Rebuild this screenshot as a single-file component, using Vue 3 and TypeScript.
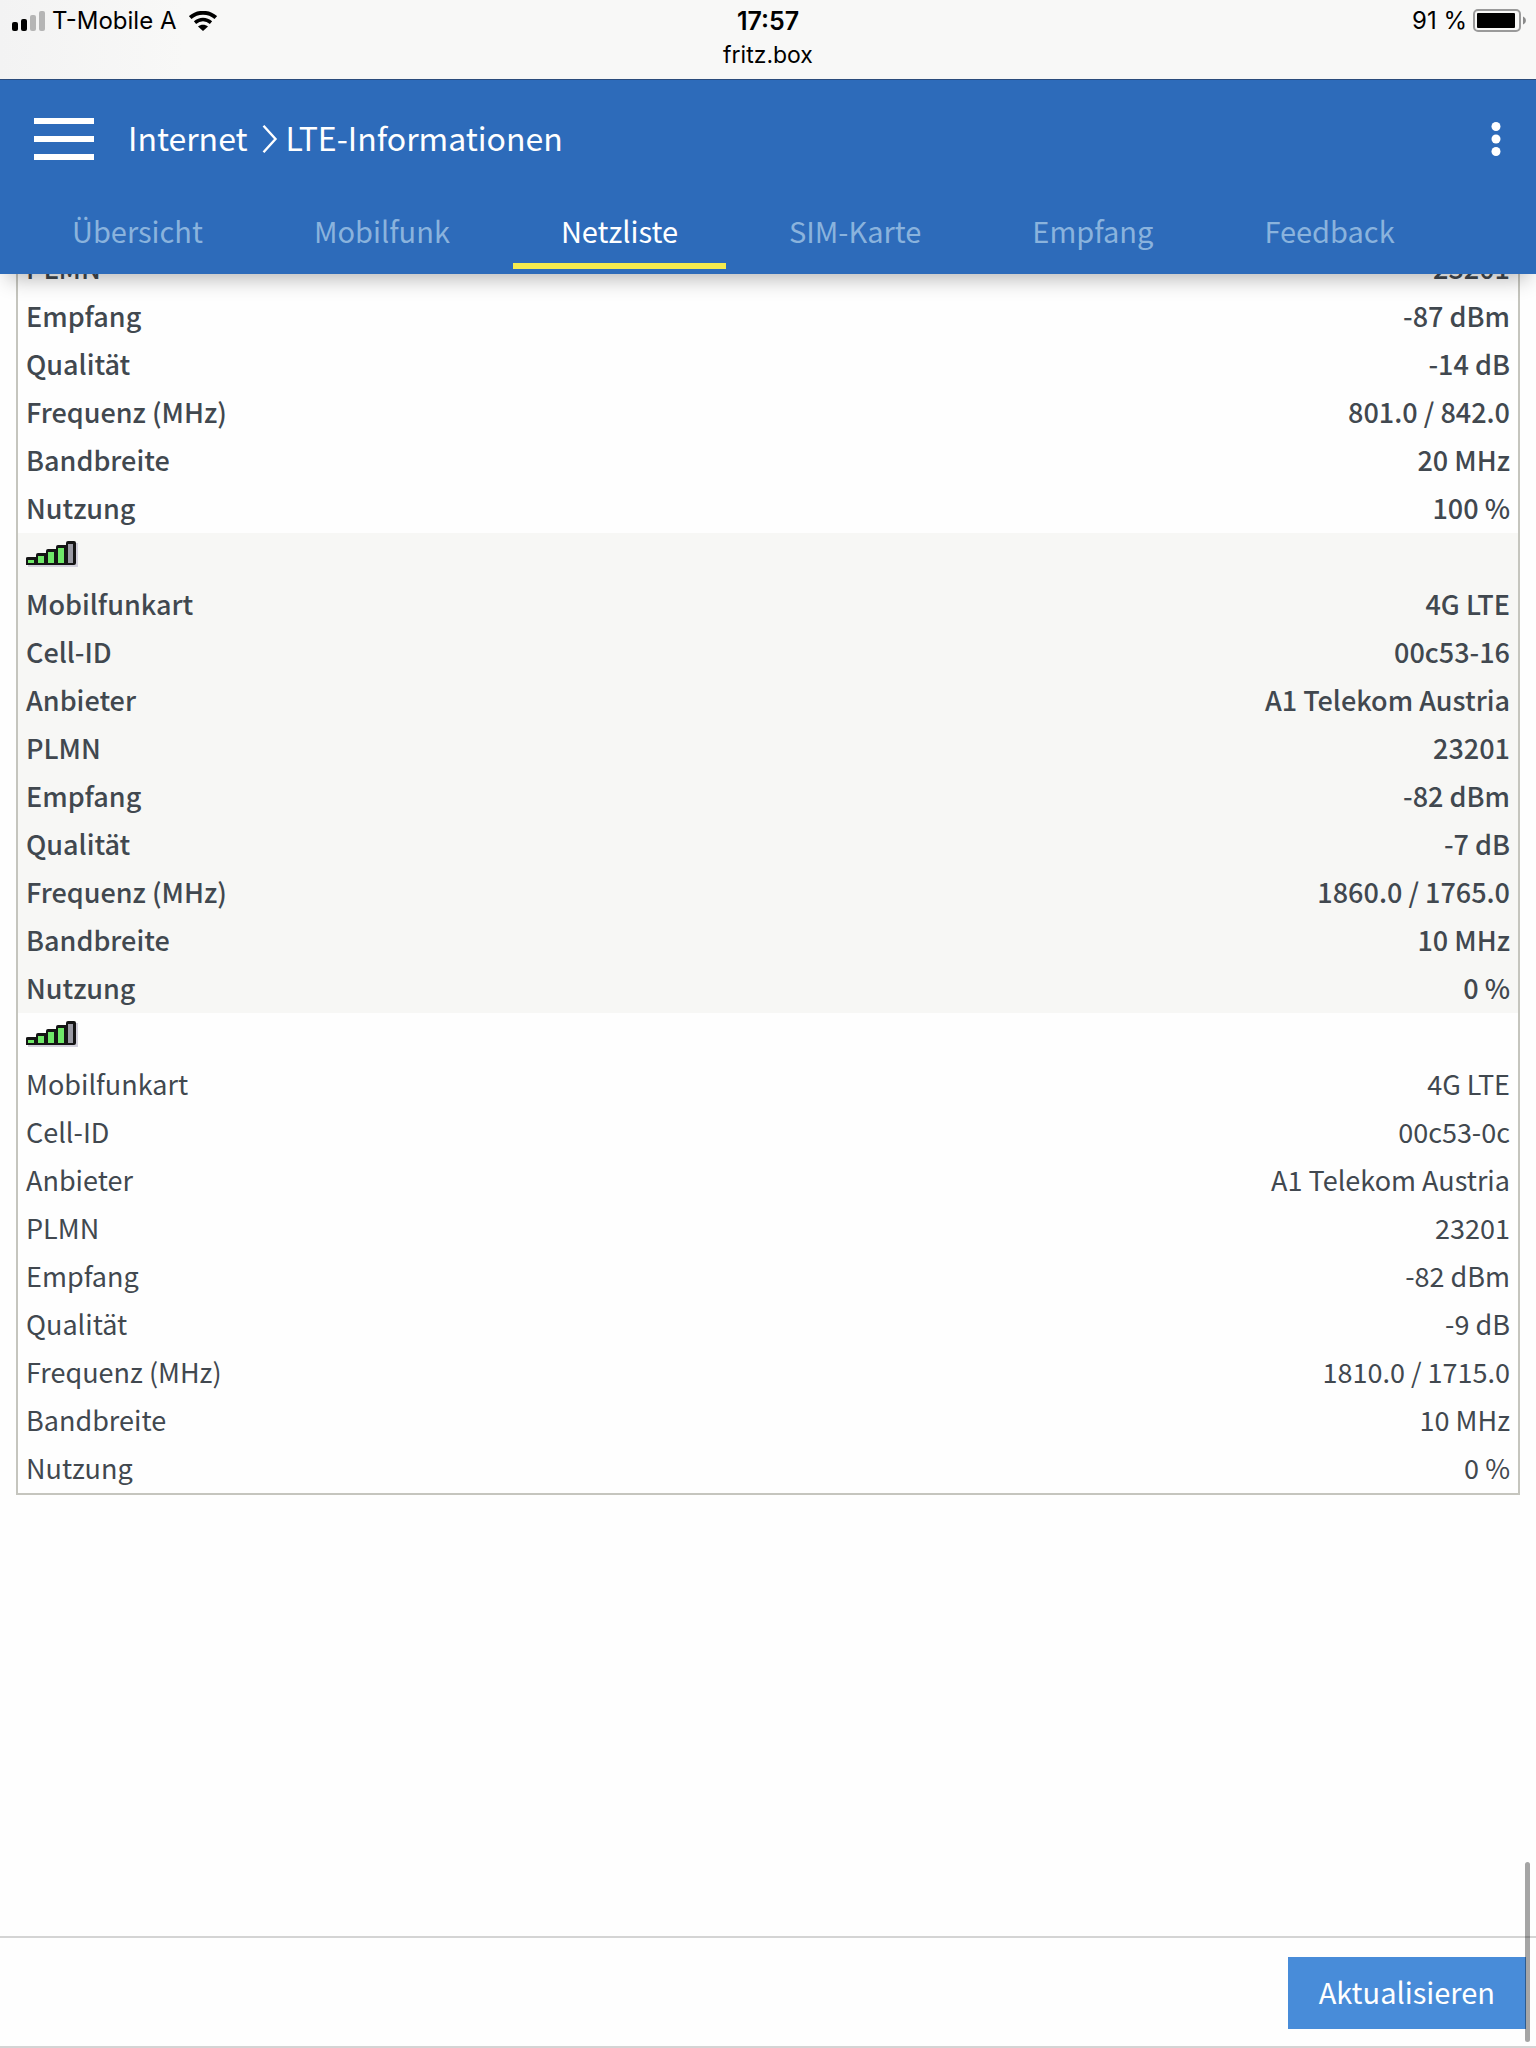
<script setup lang="ts">
interface Row {
  label: string
  value: string
}

interface Cell {
  id: string
  icon: boolean
  connected: boolean
  shaded: boolean
  rows: Row[]
}

const tabs: string[] = ['Übersicht', 'Mobilfunk', 'Netzliste', 'SIM-Karte', 'Empfang', 'Feedback']
const activeTab = 'Netzliste'

const cells: Cell[] = [
  {
    id: 'first',
    icon: false,
    connected: true,
    shaded: false,
    rows: [
      { label: 'PLMN', value: '23201' },
      { label: 'Empfang', value: '-87 dBm' },
      { label: 'Qualität', value: '-14 dB' },
      { label: 'Frequenz (MHz)', value: '801.0 / 842.0' },
      { label: 'Bandbreite', value: '20 MHz' },
      { label: 'Nutzung', value: '100 %' },
    ],
  },
  {
    id: 'second',
    icon: true,
    connected: true,
    shaded: true,
    rows: [
      { label: 'Mobilfunkart', value: '4G LTE' },
      { label: 'Cell-ID', value: '00c53-16' },
      { label: 'Anbieter', value: 'A1 Telekom Austria' },
      { label: 'PLMN', value: '23201' },
      { label: 'Empfang', value: '-82 dBm' },
      { label: 'Qualität', value: '-7 dB' },
      { label: 'Frequenz (MHz)', value: '1860.0 / 1765.0' },
      { label: 'Bandbreite', value: '10 MHz' },
      { label: 'Nutzung', value: '0 %' },
    ],
  },
  {
    id: 'third',
    icon: true,
    connected: false,
    shaded: false,
    rows: [
      { label: 'Mobilfunkart', value: '4G LTE' },
      { label: 'Cell-ID', value: '00c53-0c' },
      { label: 'Anbieter', value: 'A1 Telekom Austria' },
      { label: 'PLMN', value: '23201' },
      { label: 'Empfang', value: '-82 dBm' },
      { label: 'Qualität', value: '-9 dB' },
      { label: 'Frequenz (MHz)', value: '1810.0 / 1715.0' },
      { label: 'Bandbreite', value: '10 MHz' },
      { label: 'Nutzung', value: '0 %' },
    ],
  },
]
</script>

<template>
  <div class="screen">
    <div class="status">
      <div class="status-row">
        <div class="carrier">
          <svg class="bars" width="34" height="20" viewBox="0 0 34 20" aria-hidden="true">
            <rect x="0" y="11" width="6" height="9" rx="2" />
            <rect x="9" y="8" width="6" height="12" rx="2" />
            <rect x="18" y="4" width="6" height="16" rx="2" fill="#b5b5b5" />
            <rect x="27" y="0" width="6" height="20" rx="2" fill="#b5b5b5" />
          </svg>
          <span>T-Mobile A</span>
          <svg class="wifi" width="28" height="20" viewBox="0 0 28 20" aria-hidden="true">
            <path d="M1.2 6.6C8.4 .1 19.600 .1 26.800 6.600" fill="none" stroke="#000" stroke-width="3.800" />
            <path d="M6 11.600C10.800 7.400 17.200 7.400 22 11.600" fill="none" stroke="#000" stroke-width="3.400" />
            <path d="M9 15.600C11.800 13 16.200 13 19 15.600L14 20Z" />
          </svg>
        </div>
        <div class="time">17:57</div>
        <div class="power">
          <span>91 %</span>
          <svg width="53" height="24" viewBox="0 0 53 24" aria-hidden="true">
            <rect x="1" y="1" width="46" height="21" rx="4" fill="none" stroke="#9a9a9a" stroke-width="2" />
            <rect x="4" y="4" width="38" height="15" rx="1" />
            <path d="M50 7.500C53.800 9 53.800 14 50 15.500Z" fill="#8a8a8a" />
          </svg>
        </div>
      </div>
      <div class="host">fritz.box</div>
    </div>

    <header class="header">
      <div class="title-row">
        <button class="menu" type="button" aria-label="Menü">
          <span></span>
          <span></span>
          <span></span>
        </button>
        <h1 class="crumbs">
          <span>Internet</span>
          <svg width="16" height="28" viewBox="0 0 16 28" aria-hidden="true">
            <path d="M1.500 .8L13.500 14L1.500 27.200" fill="none" stroke="#fff" stroke-width="2.400" />
          </svg>
          <span>LTE-Informationen</span>
        </h1>
        <button class="more" type="button" aria-label="Mehr">
          <svg width="10" height="36" viewBox="0 0 10 36" aria-hidden="true">
            <circle cx="5" cy="5.500" r="4.500" />
            <circle cx="5" cy="18" r="4.500" />
            <circle cx="5" cy="30.500" r="4.500" />
          </svg>
        </button>
      </div>
      <nav class="tabs">
        <a v-for="tab in tabs" :key="tab" href="#" :class="['tab', { active: tab === activeTab }]">{{ tab }}</a>
      </nav>
    </header>

    <main class="content">
      <table class="cells">
        <tbody v-for="cell in cells" :key="cell.id" :class="{ connected: cell.connected, shaded: cell.shaded }">
          <tr v-if="cell.icon">
            <td class="signal" colspan="2">
              <svg width="52" height="26" viewBox="0 0 52 26" aria-label="Signalstärke 4 von 5" role="img">
                <path d="M2 18H11V14H21V10H31V6H41V2H52V26H2Z" fill="#d3d1dc" />
                <path d="M0 17Q0 16 2 16H10V14Q10 12 12 12H20V10Q20 8 22 8H30V6Q30 4 32 4H40V2Q40 0 42 0H48Q50 0 50 2V22Q50 24 48 24H0Z" fill="#151515" />
                <path d="M2 19H8V22H2ZM12 15H18V22H12ZM22 11H28V22H22ZM32 7H38V22H32Z" fill="#6fe868" />
                <path d="M42 3H47V22H42Z" fill="#9a9aa4" />
              </svg>
            </td>
          </tr>
          <tr v-for="row in cell.rows" :key="row.label">
            <th scope="row">{{ row.label }}</th>
            <td>{{ row.value }}</td>
          </tr>
        </tbody>
      </table>
    </main>

    <footer class="footer">
      <button class="refresh" type="button">Aktualisieren</button>
    </footer>
    <div class="scrollbar"></div>
  </div>
</template>

<style>
body {
  margin: 0;
}
</style>

<style scoped>
.screen {
  position: relative;
  display: flex;
  flex-direction: column;
  height: 100vh;
  overflow: hidden;
  background: #fefefe;
  color: #41484f;
  font-family: "Noto Sans CJK SC", "Noto Sans", sans-serif;
}

.screen * {
  box-sizing: border-box;
}

.status {
  flex: none;
  height: 80px;
  padding: 4px 12px 0;
  border-bottom: 1px solid #2b4c7c;
  background: linear-gradient(90deg, #f3f3f3, #f8f8f7 12%);
  color: #000;
  font-family: Inter, "Liberation Sans", sans-serif;
  font-size: 24px;
  line-height: 34px;
}

.status-row {
  display: grid;
  grid-template-columns: 1fr auto 1fr;
}

.carrier,
.power {
  display: flex;
  align-items: center;
}

.carrier .bars {
  margin-right: 6px;
}

.carrier .wifi {
  margin-left: 13px;
}

.power {
  justify-content: flex-end;
  gap: 6px;
  margin-right: -2px;
}

.time {
  font-size: 25px;
  font-weight: 600;
}

.host {
  font-size: 23px;
  text-align: center;
}

.header {
  position: relative;
  z-index: 1;
  flex: none;
  height: 194px;
  background: #2d6bba;
  box-shadow: 0 12px 20px -8px rgba(0, 0, 0, 0.3);
  color: #fff;
}

.title-row {
  display: flex;
  align-items: center;
  height: 118px;
  padding: 0 35px 0 34px;
}

.menu,
.more {
  display: flex;
  flex-direction: column;
  padding: 0;
  border: 0;
  background: none;
}

.menu {
  gap: 12px;
  width: 60px;
}

.menu span {
  height: 6px;
  background: #fff;
}

.more {
  margin-left: auto;
  fill: #fff;
}

.crumbs {
  display: flex;
  align-items: center;
  margin: 0 0 0 34px;
  font-size: 32px;
  font-weight: 400;
  line-height: 44px;
}

.crumbs span {
  padding-bottom: 4px;
}

.crumbs svg {
  margin: 0 8px 0 14px;
}

.tabs {
  display: flex;
  gap: 15px;
  padding-left: 24px;
}

.tab {
  height: 71px;
  padding: 10px 48px 0;
  border-bottom: 6px solid transparent;
  color: #8ab3dd;
  font-size: 29px;
  line-height: 44px;
  text-decoration: none;
}

.tab.active {
  border-color: #f5eb4f;
  color: #fff;
}

.content {
  flex: 1;
  min-height: 0;
  padding: 0 16px;
  overflow: hidden;
}

/* The list is scrolled so that its first row sits partly under the header. */
.cells {
  width: 100%;
  margin-top: -29px;
  border: 2px solid #c5c5be;
  border-top: 0;
  border-spacing: 0;
  font-size: 27px;
  line-height: 46px;
}

.cells th,
.cells td {
  height: 48px;
  padding: 0 8px 2px;
  font-weight: 400;
}

.cells th {
  text-align: left;
}

.cells td {
  text-align: right;
}

.connected th,
.connected td {
  font-weight: 500;
}

.shaded {
  background: #f7f7f5;
}

.cells .signal {
  padding-top: 8px;
  text-align: left;
  vertical-align: top;
  line-height: 0;
}

.footer {
  display: flex;
  flex: none;
  justify-content: flex-end;
  height: 112px;
  padding: 19px 10px 17px;
  border-top: 2px solid #d4d4d4;
  border-bottom: 2px solid #d4d4d4;
}

.refresh {
  padding: 0 31px 4px;
  border: 0;
  background: #488cd9;
  color: #fff;
  font-family: inherit;
  font-size: 29px;
}

.scrollbar {
  position: absolute;
  z-index: 2;
  right: 6px;
  bottom: 6px;
  width: 5px;
  height: 180px;
  border-radius: 3px;
  background: rgba(0, 0, 0, 0.35);
}
</style>
